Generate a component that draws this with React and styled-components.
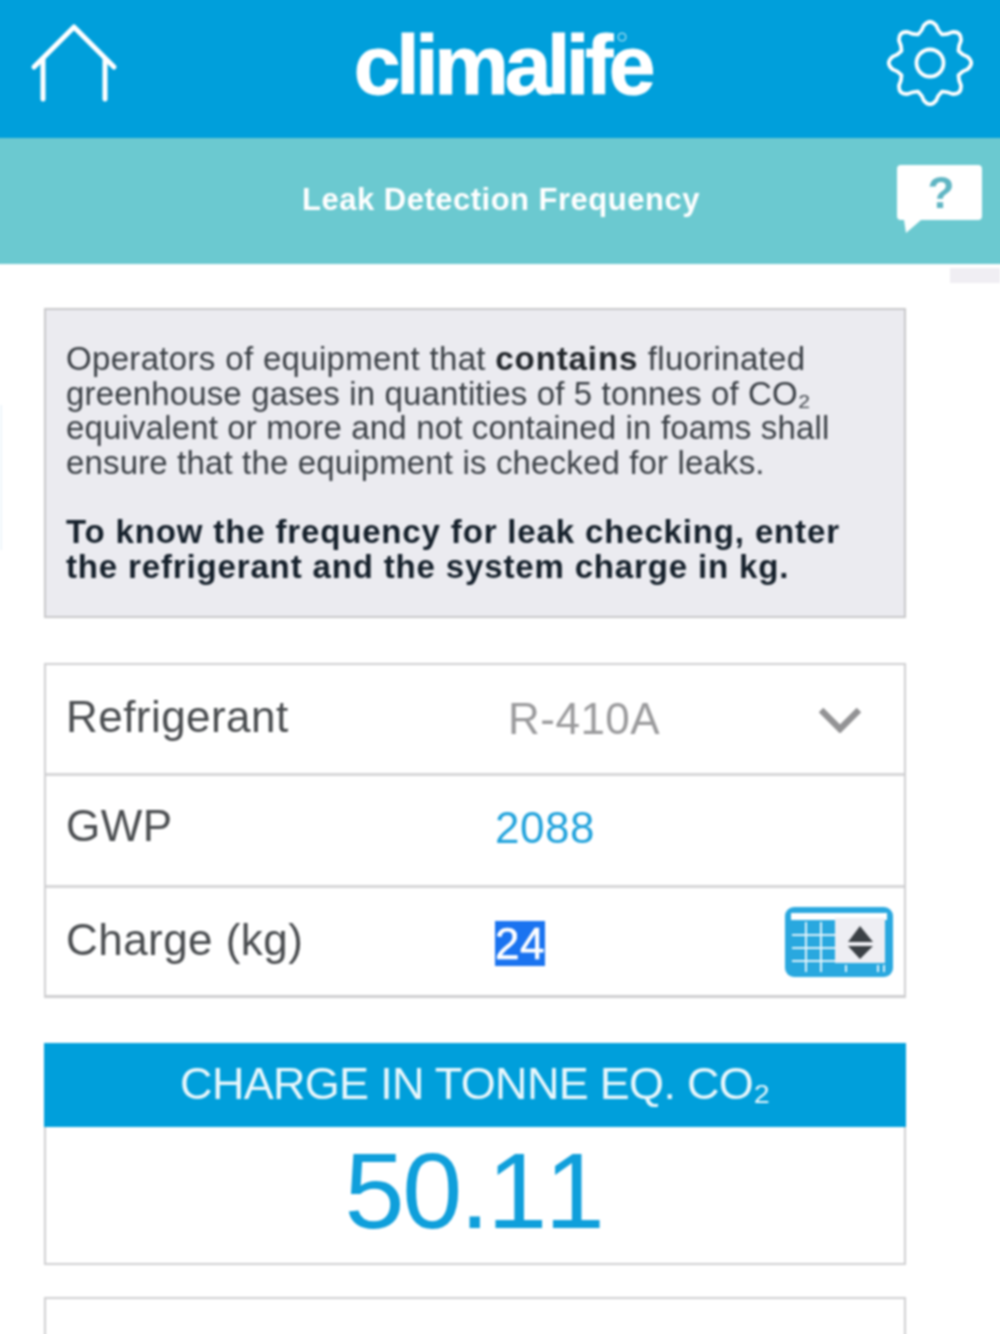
import React from "react";
import styled, { createGlobalStyle } from "styled-components";

const Global = createGlobalStyle`
  html, body { margin: 0; padding: 0; background: #fff; }
  body { font-family: "Liberation Sans", Arial, sans-serif; }
  #root { width: 1000px; height: 1334px; overflow: hidden; }
`;

const Page = styled.div`
  position: relative;
  width: 1000px;
  background: #fff;
  filter: blur(0.8px);
`;

const TopBar = styled.header`
  height: 138px;
  background: #009fdb;
  box-shadow: -12px 0 0 #009fdb, 12px 0 0 #009fdb, 0 -12px 0 #009fdb, -12px -12px 0 #009fdb, 12px -12px 0 #009fdb;
  display: flex;
  align-items: center;
  justify-content: space-between;
  padding: 0 27px 10px 30px;
  box-sizing: border-box;
`;

const Logo = styled.div`
  position: relative;
  color: #fff;
  font-size: 84px;
  font-weight: 700;
  letter-spacing: -4.3px;
  line-height: 1;
  -webkit-text-stroke: 1px #fff;
  margin-top: 2px;
`;

const LogoRing = styled.svg`
  position: absolute;
  right: 24px;
  top: 9px;
  width: 10px;
  height: 10px;
`;

const SubBar = styled.div`
  height: 126px;
  background: #6bc9d0;
  box-shadow: -12px 0 0 #6bc9d0, 12px 0 0 #6bc9d0;
  display: flex;
  align-items: center;
  justify-content: space-between;
  padding: 0 18px 0 302px;
  box-sizing: border-box;
`;

const SubTitle = styled.h1`
  margin: 0 0 2px;
  color: #fff;
  font-size: 31px;
  font-weight: 700;
  letter-spacing: 0.5px;
`;

const Content = styled.main`
  width: 862px;
  margin-left: 44px;
  padding-top: 44px;
  display: flex;
  flex-direction: column;
`;

const InfoBox = styled.section`
  box-sizing: border-box;
  height: 310px;
  background: #ebebf0;
  border: 2px solid #c8c8ca;
  padding: 32px 20px 0;
  font-size: 33px;
  line-height: 34.6px;
`;

const InfoText = styled.p`
  margin: 0 0 34.6px;
  white-space: nowrap;
  color: ${(p) => (p.$strong ? "#15202b" : "#3a3f45")};
  font-weight: ${(p) => (p.$strong ? 700 : 400)};
  letter-spacing: ${(p) => (p.$strong ? "0.85px" : "0.15px")};
`;

const FirstLine = styled.span`
  letter-spacing: 0.33px;
`;

const Strong = styled.b`
  color: #22262b;
  letter-spacing: 0.9px;
`;

const Table = styled.section`
  margin-top: 45px;
  border: 2px solid #cfcfd1;
  border-bottom-width: 3px;
`;

const Row = styled.div`
  box-sizing: border-box;
  height: ${(p) => p.$h}px;
  display: grid;
  grid-template-columns: 429px 1fr;
  align-items: center;
  padding: 0 11px ${(p) => p.$lift || 0}px 20px;
  & + & { border-top: 3px solid #d6d6d8; }
`;

const Label = styled.span`
  color: #4a4d50;
  font-size: 44px;
  letter-spacing: 0.45px;
  padding-bottom: 4px;
`;

const ValueCell = styled.div`
  display: flex;
  align-items: center;
  justify-content: space-between;
  font-size: 44px;
  letter-spacing: 0.5px;
`;

const SelectValue = styled.span`
  color: #9a9a9c;
  margin-left: 13px;
`;

const Gwp = styled.span`
  color: #22a3dc;
`;

const Selected = styled.span`
  background: #1a73f0;
  color: #fff;
  line-height: 45px;
  margin-top: 3px;
  -webkit-text-stroke: 0.6px #fff;
`;

const ResultHead = styled.div`
  margin-top: 45px;
  height: 84px;
  background: #009fdb;
  color: #e9f7fc;
  font-size: 45px;
  letter-spacing: -0.7px;
  display: flex;
  align-items: center;
  justify-content: center;
  padding-bottom: 2px;
  box-sizing: border-box;
`;

const ResultBody = styled.div`
  box-sizing: border-box;
  height: 138px;
  border: 2px solid #cfcfd1;
  border-top: 0;
  display: flex;
  align-items: center;
  justify-content: center;
  color: #0f9fdb;
  font-size: 108px;
  line-height: 1;
  font-kerning: none;
  letter-spacing: -2.5px;
  padding: 0 3px 8px 0;
`;

const NextBox = styled.div`
  margin-top: 32px;
  height: 80px;
  border: 2px solid #cfcfd1;
`;

const StrayTab = styled.div`
  position: absolute;
  right: 0;
  top: 268px;
  width: 50px;
  height: 15px;
  background: #f0eef3;
`;

const StrayEdge = styled.div`
  position: absolute;
  left: 0;
  top: 405px;
  width: 2px;
  height: 145px;
  background: #eef6fb;
`;

const HomeIcon = () => (
  <svg width="88" height="84" viewBox="0 0 88 84" fill="none" stroke="#fff" strokeWidth="5" strokeLinecap="round" strokeLinejoin="round">
    <path d="M4 45 L44 5 L84 45" />
    <path d="M13 37 V77" />
    <path d="M75 37 V77" />
  </svg>
);

const GearIcon = () => {
  const pts = [];
  const n = 8;
  for (let i = 0; i < n; i++) {
    const a = (i / n) * Math.PI * 2 - Math.PI / 2;
    const s = Math.PI / n;
    const p = (r, t) => `${(43 + r * Math.cos(t)).toFixed(1)} ${(43 + r * Math.sin(t)).toFixed(1)}`;
    pts.push(`${i === 0 ? "M" : "L"}${p(38, a - s * 0.42)}`);
    pts.push(`Q${p(45, a)} ${p(38, a + s * 0.42)}`);
    pts.push(`Q${p(33, a + s * 0.62)} ${p(31, a + s)}`);
    pts.push(`Q${p(33, a + s * 1.38)} ${p(38, a + s * 1.58)}`);
  }
  return (
    <svg width="86" height="86" viewBox="0 0 86 86" fill="none" stroke="#fff" strokeWidth="3.8" strokeLinejoin="round" style={{ marginTop: -2 }}>
      <path d={pts.join(" ") + " Z"} />
      <circle cx="43" cy="43" r="13.5" />
    </svg>
  );
};

const HelpIcon = () => (
  <svg width="85" height="70" viewBox="0 0 85 70" style={{ marginBottom: 2 }}>
    <path d="M4 0 H81 Q85 0 85 4 V51 Q85 55 81 55 H24 L9 68 L7 55 H4 Q0 55 0 51 V4 Q0 0 4 0 Z" fill="#fff" />
    <text x="44" y="43" textAnchor="middle" fontFamily="Liberation Sans, Arial, sans-serif" fontWeight="700" fontSize="44" fill="#5fb5c3">?</text>
  </svg>
);

const Chevron = () => (
  <svg width="42" height="28" viewBox="0 0 42 28" fill="none" stroke="#939395" strokeWidth="6.5" style={{ marginRight: 32 }}>
    <path d="M2 5 L21 24 L40 5" />
  </svg>
);

const KeypadIcon = () => (
  <svg width="108" height="70" viewBox="0 0 108 70">
    <rect x="0" y="0" width="108" height="70" rx="9" fill="#29a8df" />
    <rect x="6" y="6" width="96" height="7" fill="#fff" />
    {[20, 35].map((x) => (
      <rect key={x} x={x} y="15" width="2" height="50" fill="#dff2fa" />
    ))}
    {[27, 40, 53].map((y) => (
      <rect key={y} x="7" y={y} width="44" height="2" fill="#dff2fa" />
    ))}
    <rect x="50" y="11" width="50" height="45" fill="#eeeef3" />
    <path d="M63 35 L75 19 L88 35 Z" fill="#3b4045" />
    <path d="M63 39 L75 52 L88 39 Z" fill="#3b4045" />
    {[60, 92, 98].map((x) => (
      <rect key={x} x={x} y="58" width="2" height="7" fill="#dff2fa" />
    ))}
  </svg>
);

export default function App() {
  return (
    <Page>
      <Global />
      <TopBar>
        <HomeIcon />
        <Logo>
          climalife
          <LogoRing viewBox="0 0 10 10" fill="none" stroke="#cfeef9" strokeWidth="1">
            <circle cx="5" cy="5" r="4" />
          </LogoRing>
        </Logo>
        <GearIcon />
      </TopBar>
      <SubBar>
        <SubTitle>Leak Detection Frequency</SubTitle>
        <HelpIcon />
      </SubBar>
      <Content>
        <InfoBox>
          <InfoText>
            <FirstLine>
              Operators of equipment that <Strong>contains</Strong> fluorinated
            </FirstLine>
            <br />
            greenhouse gases in quantities of 5 tonnes of CO₂
            <br />
            equivalent or more and not contained in foams shall
            <br />
            ensure that the equipment is checked for leaks.
          </InfoText>
          <InfoText $strong>
            To know the frequency for leak checking, enter
            <br />
            the refrigerant and the system charge in kg.
          </InfoText>
        </InfoBox>
        <Table>
          <Row $h={108}>
            <Label>Refrigerant</Label>
            <ValueCell>
              <SelectValue>R-410A</SelectValue>
              <Chevron />
            </ValueCell>
          </Row>
          <Row $h={112} $lift={6}>
            <Label>GWP</Label>
            <ValueCell>
              <Gwp>2088</Gwp>
            </ValueCell>
          </Row>
          <Row $h={110}>
            <Label>Charge (kg)</Label>
            <ValueCell>
              <Selected>24</Selected>
              <KeypadIcon />
            </ValueCell>
          </Row>
        </Table>
        <ResultHead>CHARGE IN TONNE EQ. CO₂</ResultHead>
        <ResultBody>50.11</ResultBody>
        <NextBox />
      </Content>
      <StrayTab />
      <StrayEdge />
    </Page>
  );
}
